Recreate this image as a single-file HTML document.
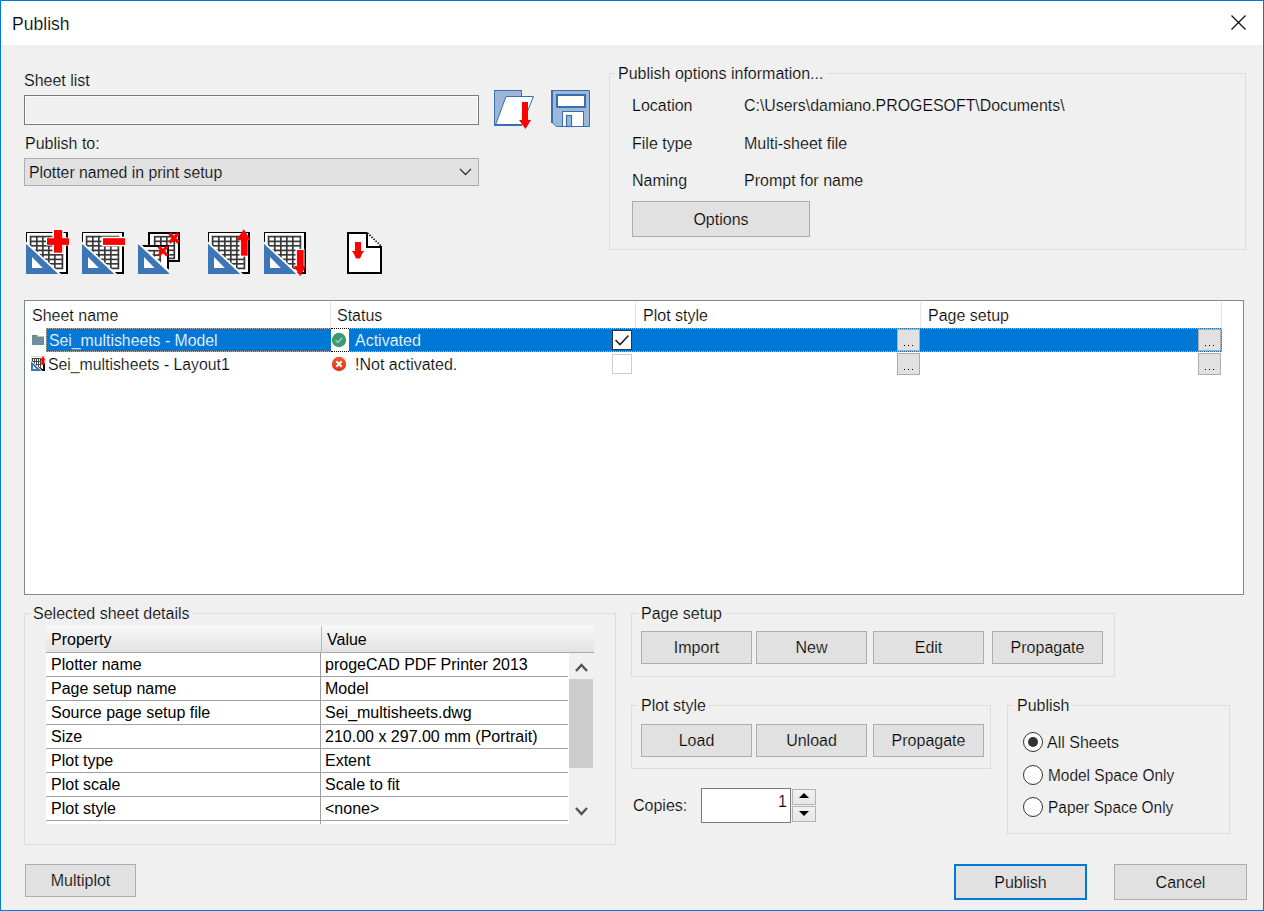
<!DOCTYPE html>
<html><head><meta charset="utf-8">
<style>
*{box-sizing:border-box;margin:0;padding:0}
html,body{width:1264px;height:911px;overflow:hidden;background:#f0f0f0}
body{position:relative;font-family:"Liberation Sans",sans-serif;font-size:16px;line-height:16px;color:#000}
.a{position:absolute}
.t{position:absolute;white-space:pre;font-size:16px;line-height:16px}
.win{position:absolute;left:0;top:0;width:1264px;height:911px;border:1px solid #0078d7;background:#f0f0f0}
.title{position:absolute;left:1px;top:1px;width:1262px;height:44px;background:#fff}
.grp{position:absolute;border:1px solid #dcdcdc}
.glab{position:absolute;background:#f0f0f0;padding:0 3px;white-space:pre;line-height:16px}
.btn{position:absolute;background:#e1e1e1;border:1px solid #adadad;text-align:center;white-space:pre}
.bt{position:absolute;left:0;right:0;line-height:16px;-webkit-text-stroke:0.2px #e1e1e1}
.t,.glab{-webkit-text-stroke:0.2px #f0f0f0}
.sw{-webkit-text-stroke:0.2px #fff}
.sb{-webkit-text-stroke:0.2px #0078d7}
.sg{-webkit-text-stroke:0.2px #e1e1e1}
.sn{-webkit-text-stroke:0}
</style></head><body>
<div class="win"></div>
<div class="title"></div>
<div class="t sw" style="left:12px;top:14px;font-size:19px;line-height:19px;transform:scaleX(0.925);transform-origin:0 0">Publish</div>
<!-- close X -->
<svg class="a" style="left:1230px;top:14px" width="17" height="17" viewBox="0 0 17 17"><path d="M1.5 1.5L15.5 15.5M15.5 1.5L1.5 15.5" stroke="#111" stroke-width="1.3" fill="none"/></svg>

<!-- Sheet list -->
<div class="t" style="left:24px;top:73px">Sheet list</div>
<div class="a" style="left:24px;top:95px;width:455px;height:30px;border:1px solid #7a7a7a;background:#f0f0f0;box-shadow:inset 0 0 0 1px #fbfbfb"></div>

<div class="t" style="left:25px;top:136px">Publish to:</div>
<div class="a" style="left:24px;top:158px;width:455px;height:28px;border:1px solid #adadad;background:#e1e1e1"></div>
<div class="t sg" style="left:29px;top:165px;font-size:15.8px">Plotter named in print setup</div>
<svg class="a" style="left:459px;top:168px" width="13" height="8" viewBox="0 0 13 8"><path d="M1 1L6.5 6.5L12 1" stroke="#333" stroke-width="1.3" fill="none"/></svg>

<!-- Publish options group -->
<div class="grp" style="left:609px;top:73px;width:637px;height:177px"></div>
<div class="glab" style="left:615px;top:66px">Publish options information...</div>
<div class="t" style="left:632px;top:98px">Location</div>
<div class="t" style="left:744px;top:98px;font-size:15.9px">C:\Users\damiano.PROGESOFT\Documents\</div>
<div class="t" style="left:632px;top:136px">File type</div>
<div class="t" style="left:744px;top:136px">Multi-sheet file</div>
<div class="t" style="left:632px;top:173px">Naming</div>
<div class="t" style="left:744px;top:173px">Prompt for name</div>
<div class="btn" style="left:632px;top:201px;width:178px;height:36px"><div class="bt" style="top:10px">Options</div></div>

<!-- ICONS -->
<svg class="a" style="left:22px;top:228px" width="52" height="52" viewBox="0 0 52 52"><g transform="translate(4,4)"><rect x="0" y="0" width="42" height="42" fill="#000"/><rect x="1" y="1" width="39" height="39" fill="#fff"/><g fill="#383838"><rect x="3.75" y="3.9" width="1.7" height="33.2"/><rect x="9.95" y="3.9" width="1.7" height="33.2"/><rect x="15.95" y="3.9" width="1.7" height="33.2"/><rect x="21.95" y="3.9" width="1.7" height="33.2"/><rect x="27.95" y="3.9" width="1.7" height="33.2"/><rect x="35.55" y="3.9" width="1.7" height="33.2"/><rect x="3.9" y="3.75" width="33.2" height="1.7"/><rect x="3.9" y="8.55" width="33.2" height="1.7"/><rect x="3.9" y="12.95" width="33.2" height="1.7"/><rect x="3.9" y="17.55" width="33.2" height="1.7"/><rect x="3.9" y="21.95" width="33.2" height="1.7"/><rect x="3.9" y="26.55" width="33.2" height="1.7"/><rect x="3.9" y="30.95" width="33.2" height="1.7"/><rect x="3.9" y="35.55" width="33.2" height="1.7"/></g><path d="M0 9.5 L35 42 L0 42 Z" fill="#fff"/><path d="M0 11.8 L32.3 42 L0 42 Z" fill="#3d76b6"/><path d="M6 25.1 L16.8 36 L6 36 Z" fill="#fff"/></g><g transform="translate(4,4)"><path d="M26.5 -3 h11 v8.5 h6 v8 h-6 v8.5 h-11 v-8.5 h-6.5 v-8 h6.5 z" fill="#fff"/><rect x="28" y="-2" width="8.2" height="22.7" fill="#f00"/><rect x="21" y="6.2" width="22" height="6.7" fill="#f00"/></g></svg>
<svg class="a" style="left:78px;top:228px" width="52" height="52" viewBox="0 0 52 52"><g transform="translate(4,4)"><rect x="0" y="0" width="42" height="42" fill="#000"/><rect x="1" y="1" width="39" height="39" fill="#fff"/><g fill="#383838"><rect x="3.75" y="3.9" width="1.7" height="33.2"/><rect x="9.95" y="3.9" width="1.7" height="33.2"/><rect x="15.95" y="3.9" width="1.7" height="33.2"/><rect x="21.95" y="3.9" width="1.7" height="33.2"/><rect x="27.95" y="3.9" width="1.7" height="33.2"/><rect x="35.55" y="3.9" width="1.7" height="33.2"/><rect x="3.9" y="3.75" width="33.2" height="1.7"/><rect x="3.9" y="8.55" width="33.2" height="1.7"/><rect x="3.9" y="12.95" width="33.2" height="1.7"/><rect x="3.9" y="17.55" width="33.2" height="1.7"/><rect x="3.9" y="21.95" width="33.2" height="1.7"/><rect x="3.9" y="26.55" width="33.2" height="1.7"/><rect x="3.9" y="30.95" width="33.2" height="1.7"/><rect x="3.9" y="35.55" width="33.2" height="1.7"/></g><path d="M0 9.5 L35 42 L0 42 Z" fill="#fff"/><path d="M0 11.8 L32.3 42 L0 42 Z" fill="#3d76b6"/><path d="M6 25.1 L16.8 36 L6 36 Z" fill="#fff"/></g><g transform="translate(4,4)"><rect x="19.5" y="4.7" width="23" height="9.7" fill="#fff"/><rect x="21" y="6.2" width="22" height="6.7" fill="#f00"/></g></svg>
<svg class="a" style="left:204px;top:228px" width="52" height="52" viewBox="0 0 52 52"><g transform="translate(4,4)"><rect x="0" y="0" width="42" height="42" fill="#000"/><rect x="1" y="1" width="39" height="39" fill="#fff"/><g fill="#383838"><rect x="3.75" y="3.9" width="1.7" height="33.2"/><rect x="9.95" y="3.9" width="1.7" height="33.2"/><rect x="15.95" y="3.9" width="1.7" height="33.2"/><rect x="21.95" y="3.9" width="1.7" height="33.2"/><rect x="27.95" y="3.9" width="1.7" height="33.2"/><rect x="35.55" y="3.9" width="1.7" height="33.2"/><rect x="3.9" y="3.75" width="33.2" height="1.7"/><rect x="3.9" y="8.55" width="33.2" height="1.7"/><rect x="3.9" y="12.95" width="33.2" height="1.7"/><rect x="3.9" y="17.55" width="33.2" height="1.7"/><rect x="3.9" y="21.95" width="33.2" height="1.7"/><rect x="3.9" y="26.55" width="33.2" height="1.7"/><rect x="3.9" y="30.95" width="33.2" height="1.7"/><rect x="3.9" y="35.55" width="33.2" height="1.7"/></g><path d="M0 9.5 L35 42 L0 42 Z" fill="#fff"/><path d="M0 11.8 L32.3 42 L0 42 Z" fill="#3d76b6"/><path d="M6 25.1 L16.8 36 L6 36 Z" fill="#fff"/></g><g transform="translate(4,4)"><path d="M31.5 8 H40 V24.5 H31.5 Z" fill="#fff"/><path d="M32.9 6 H39.7 V23.7 H32.9 Z" fill="#f00"/><path d="M28.3 8.3 L35.8 -2.8 L42.7 8.3 Z" fill="#f00"/></g></svg>
<svg class="a" style="left:260px;top:228px" width="52" height="52" viewBox="0 0 52 52"><g transform="translate(4,4)"><rect x="0" y="0" width="42" height="42" fill="#000"/><rect x="1" y="1" width="39" height="39" fill="#fff"/><g fill="#383838"><rect x="3.75" y="3.9" width="1.7" height="33.2"/><rect x="9.95" y="3.9" width="1.7" height="33.2"/><rect x="15.95" y="3.9" width="1.7" height="33.2"/><rect x="21.95" y="3.9" width="1.7" height="33.2"/><rect x="27.95" y="3.9" width="1.7" height="33.2"/><rect x="35.55" y="3.9" width="1.7" height="33.2"/><rect x="3.9" y="3.75" width="33.2" height="1.7"/><rect x="3.9" y="8.55" width="33.2" height="1.7"/><rect x="3.9" y="12.95" width="33.2" height="1.7"/><rect x="3.9" y="17.55" width="33.2" height="1.7"/><rect x="3.9" y="21.95" width="33.2" height="1.7"/><rect x="3.9" y="26.55" width="33.2" height="1.7"/><rect x="3.9" y="30.95" width="33.2" height="1.7"/><rect x="3.9" y="35.55" width="33.2" height="1.7"/></g><path d="M0 9.5 L35 42 L0 42 Z" fill="#fff"/><path d="M0 11.8 L32.3 42 L0 42 Z" fill="#3d76b6"/><path d="M6 25.1 L16.8 36 L6 36 Z" fill="#fff"/></g><g transform="translate(4,4)"><rect x="31.5" y="17" width="9" height="17" fill="#fff"/><path d="M32.9 18 H39.7 V35 H32.9 Z" fill="#f00"/><path d="M29.8 34 L42.1 34 L36.2 44.3 Z" fill="#f00"/></g></svg>
<svg class="a" style="left:134px;top:228px" width="52" height="52" viewBox="0 0 52 52"><g transform="translate(-134,-228)"><rect x="148" y="232" width="32" height="30" fill="#000"/><rect x="150" y="234" width="28" height="26" fill="#fff"/><g fill="#383838"><rect x="153.85" y="236" width="1.7" height="23"/><rect x="159.95" y="236" width="1.7" height="23"/><rect x="165.95" y="236" width="1.7" height="23"/><rect x="173.45" y="236" width="1.7" height="23"/><rect x="154" y="235.85" width="21" height="1.7"/><rect x="154" y="240.45" width="21" height="1.7"/><rect x="154" y="244.95" width="21" height="1.7"/><rect x="154" y="249.45" width="21" height="1.7"/><rect x="154" y="253.95" width="21" height="1.7"/><rect x="154" y="257.55" width="21" height="1.7"/></g><rect x="142" y="245" width="27" height="29" fill="#000"/><rect x="143" y="247" width="24" height="27" fill="#fff"/><g fill="#383838"><rect x="147.35" y="250" width="1.7" height="16"/><rect x="153.35" y="250" width="1.7" height="16"/><rect x="159.35" y="250" width="1.7" height="16"/><rect x="147.5" y="249.85" width="13.5" height="1.7"/><rect x="147.5" y="254.35" width="13.5" height="1.7"/><rect x="147.5" y="258.85" width="13.5" height="1.7"/><rect x="147.5" y="263.35" width="13.5" height="1.7"/></g><path d="M138 241.5 L173.5 274 L138 274 Z" fill="#fff"/><path d="M138 244 L170 274 L138 274 Z" fill="#3d76b6"/><path d="M144 257 L154.5 268 L144 268 Z" fill="#fff"/><rect x="169" y="262" width="11" height="12" fill="#f0f0f0"/><path d="M169.5 233.5 L178.5 242.5 M178.5 233.5 L169.5 242.5" stroke="#f00" stroke-width="3.2"/><path d="M158.7 246.5 L167.3 255.5 M167.3 246.5 L158.7 255.5" stroke="#f00" stroke-width="3.2"/></g></svg>
<svg class="a" style="left:344px;top:228px" width="42" height="50" viewBox="344 228 42 50"><path d="M348 233 H367.5 L381 246 V273 H348 Z" fill="#fff"/><path d="M367.5 233 H348 V273 H381 V246" fill="none" stroke="#000" stroke-width="2"/><path d="M367.5 233 L381 246" fill="none" stroke="#000" stroke-width="1.6" stroke-dasharray="1.4 1.4"/><path d="M367 233 V247 H381" fill="none" stroke="#000" stroke-width="2"/><rect x="355" y="242" width="6" height="10" fill="#f00"/><path d="M352 251 H364 L362 254 L360 258.5 H356 L354 254 Z" fill="#f00"/></svg>
<svg class="a" style="left:490px;top:86px" width="50" height="46" viewBox="490 86 50 46"><rect x="494.5" y="90.5" width="27" height="35" fill="#9ab7d8" stroke="#3a6eb0" stroke-width="1"/><path d="M506 96.5 H533.5 L522 125 H495.5 Z" fill="#fff" stroke="#3a6eb0" stroke-width="1"/><rect x="494" y="124" width="28" height="2" fill="#3a6eb0"/><rect x="522" y="102" width="6" height="19" fill="#f00"/><path d="M519 120 H531 L525.5 129 Z" fill="#f00"/></svg>
<svg class="a" style="left:546px;top:86px" width="50" height="46" viewBox="546 86 50 46"><path d="M551.5 90.5 H589.5 V126.5 H556.5 L551.5 122 Z" fill="#9bb8d8" stroke="#3a6eb0" stroke-width="1"/><rect x="551" y="90" width="2" height="33" fill="#3a6eb0"/><rect x="557" y="95" width="28" height="12" fill="#fff" stroke="#3a6eb0" stroke-width="2"/><rect x="562.5" y="111.5" width="21" height="15" fill="#fff" stroke="#3a6eb0" stroke-width="1"/><rect x="566.5" y="115.5" width="5" height="11" fill="#9bb8d8" stroke="#3a6eb0" stroke-width="1.2"/></svg>
<!-- /ICONS -->
<!-- MAIN -->
<div class="a" style="left:24px;top:300px;width:1220px;height:295px;border:1px solid #828790;background:#fff"></div>
<div class="a" style="left:330px;top:302px;width:1px;height:26px;background:#e5e5e5"></div>
<div class="a" style="left:635px;top:302px;width:1px;height:26px;background:#e5e5e5"></div>
<div class="a" style="left:920px;top:302px;width:1px;height:26px;background:#e5e5e5"></div>
<div class="a" style="left:1221px;top:302px;width:1px;height:26px;background:#e5e5e5"></div>
<div class="t sw" style="left:32px;top:308px">Sheet name</div>
<div class="t sw" style="left:337px;top:308px">Status</div>
<div class="t sw" style="left:643px;top:308px">Plot style</div>
<div class="t sw" style="left:928px;top:308px">Page setup</div>
<div class="a" style="left:46px;top:328px;width:285px;height:24px;background:#0078d7;border-top:1px dotted #f7a35c;border-bottom:1px dotted #f7a35c;border-left:1px dotted #f7a35c"></div>
<div class="a" style="left:331px;top:328px;width:18px;height:24px;background:#fff;border-top:1px dotted #000;border-bottom:1px dotted #000"></div>
<div class="a" style="left:349px;top:328px;width:873px;height:24px;background:#0078d7;border-top:1px dotted #f7a35c;border-bottom:1px dotted #f7a35c;border-right:1px dotted #f7a35c"></div>
<svg class="a" style="left:32px;top:334px" width="13" height="12" viewBox="0 0 13 12"><path d="M0 2 H5 L6 1 H0 Z" fill="#6d8a70"/><rect x="0" y="1" width="5" height="2" fill="#6d8a70"/><rect x="0" y="2.5" width="12" height="8.5" fill="#6f8ea0"/><rect x="0" y="3" width="12" height="1" fill="#708a78"/></svg>
<div class="t sb" style="left:49px;top:333px;color:#fff;font-size:15.8px">Sei_multisheets - Model</div>
<svg class="a" style="left:331px;top:332px" width="16" height="16" viewBox="0 0 16 16"><circle cx="8" cy="8" r="7.2" fill="#3f9a6b"/><path d="M4.6 8.2 L7 10.4 L11.2 5.8" stroke="#9cc3ea" stroke-width="1.5" fill="none"/></svg>
<div class="t sb" style="left:355px;top:333px;color:#fff">Activated</div>
<div class="a" style="left:612px;top:330px;width:20px;height:20px;background:#fff;border:1.5px solid #333"></div>
<svg class="a" style="left:612px;top:330px" width="20" height="20" viewBox="0 0 20 20"><path d="M3.5 10 L8 14.5 L16.5 5.5" stroke="#222" stroke-width="1.6" fill="none"/></svg>
<div class="btn" style="left:897px;top:329px;width:23px;height:22px"></div><div class="a" style="left:904px;top:345px;width:1px;height:1px;background:#000"></div><div class="a" style="left:908px;top:345px;width:1px;height:1px;background:#000"></div><div class="a" style="left:912px;top:345px;width:1px;height:1px;background:#000"></div>
<div class="btn" style="left:1198px;top:329px;width:23px;height:22px"></div><div class="a" style="left:1205px;top:345px;width:1px;height:1px;background:#000"></div><div class="a" style="left:1209px;top:345px;width:1px;height:1px;background:#000"></div><div class="a" style="left:1213px;top:345px;width:1px;height:1px;background:#000"></div>
<svg class="a" style="left:30px;top:355px" width="16" height="17" viewBox="30 355 16 17" shape-rendering="crispEdges"><rect x="31" y="356" width="14" height="15" fill="#fff"/><rect x="31" y="356" width="14" height="1" fill="#dcdcdc"/><rect x="31" y="356" width="1" height="6" fill="#dcdcdc"/><rect x="32" y="358" width="9" height="10" fill="#444"/><g fill="#fff"><rect x="33" y="359" width="1" height="2"/><rect x="33" y="362" width="1" height="2"/><rect x="33" y="365" width="1" height="2"/><rect x="35" y="359" width="1" height="2"/><rect x="35" y="362" width="1" height="2"/><rect x="35" y="365" width="1" height="2"/><rect x="37" y="359" width="1" height="2"/><rect x="37" y="362" width="1" height="2"/><rect x="37" y="365" width="1" height="2"/><rect x="39" y="359" width="1" height="2"/><rect x="39" y="362" width="1" height="2"/><rect x="39" y="365" width="1" height="2"/></g><rect x="38" y="368" width="4" height="1" fill="#444"/><rect x="43" y="363" width="2" height="8" fill="#000"/><rect x="40" y="369" width="5" height="2" fill="#000"/></svg><svg class="a" style="left:30px;top:355px" width="16" height="17" viewBox="30 355 16 17"><path d="M31 360.3 L42.5 371 L31 371 Z" fill="#fff"/><path d="M31 361.3 L41.6 371 L31 371 Z" fill="#3d76b6"/><path d="M33 365.4 L36.5 369 L33 369 Z" fill="#fff"/><rect x="41.3" y="359" width="3.2" height="6" fill="#f00"/><path d="M40.3 360 L42.9 356 L45.3 360 Z" fill="#f00"/></svg>
<div class="t sw" style="left:48px;top:357px;font-size:15.8px">Sei_multisheets - Layout1</div>
<svg class="a" style="left:331px;top:356px" width="16" height="16" viewBox="0 0 16 16"><defs><linearGradient id="rg" x1="0" y1="0" x2="0" y2="1"><stop offset="0" stop-color="#f05a24"/><stop offset="1" stop-color="#d8361a"/></linearGradient></defs><circle cx="8" cy="8" r="7.2" fill="url(#rg)"/><path d="M5.3 5.3 L10.7 10.7 M10.7 5.3 L5.3 10.7" stroke="#fff" stroke-width="2" fill="none"/></svg>
<div class="t sw" style="left:355px;top:357px">!Not activated.</div>
<div class="a" style="left:612px;top:354px;width:20px;height:20px;background:#fff;border:1px solid #cccccc"></div>
<div class="btn" style="left:897px;top:353px;width:23px;height:22px"></div><div class="a" style="left:904px;top:369px;width:1px;height:1px;background:#000"></div><div class="a" style="left:908px;top:369px;width:1px;height:1px;background:#000"></div><div class="a" style="left:912px;top:369px;width:1px;height:1px;background:#000"></div>
<div class="btn" style="left:1198px;top:353px;width:23px;height:22px"></div><div class="a" style="left:1205px;top:369px;width:1px;height:1px;background:#000"></div><div class="a" style="left:1209px;top:369px;width:1px;height:1px;background:#000"></div><div class="a" style="left:1213px;top:369px;width:1px;height:1px;background:#000"></div>
<div class="grp" style="left:24px;top:613px;width:592px;height:232px"></div>
<div class="glab" style="left:30px;top:606px">Selected sheet details</div>
<div class="a" style="left:46px;top:625px;width:548px;height:28px;background:linear-gradient(#f8f8f8,#e3e3e3);border-bottom:1px solid #a9a9a9"></div>
<div class="a" style="left:321px;top:626px;width:1px;height:26px;background:#b8b8b8"></div>
<div class="t sn" style="left:51px;top:632px">Property</div>
<div class="t sn" style="left:327px;top:632px">Value</div>
<div class="a" style="left:46px;top:653px;width:523px;height:171px;background:#fff"></div>
<div class="a" style="left:320px;top:653px;width:1px;height:171px;background:#a0a0a0"></div>
<div class="a" style="left:46px;top:676px;width:522px;height:1px;background:#a0a0a0"></div>
<div class="t sn" style="left:51px;top:657px">Plotter name</div>
<div class="t sn" style="left:325px;top:657px">progeCAD PDF Printer 2013</div>
<div class="a" style="left:46px;top:700px;width:522px;height:1px;background:#a0a0a0"></div>
<div class="t sn" style="left:51px;top:681px">Page setup name</div>
<div class="t sn" style="left:325px;top:681px">Model</div>
<div class="a" style="left:46px;top:724px;width:522px;height:1px;background:#a0a0a0"></div>
<div class="t sn" style="left:51px;top:705px">Source page setup file</div>
<div class="t sn" style="left:325px;top:705px">Sei_multisheets.dwg</div>
<div class="a" style="left:46px;top:748px;width:522px;height:1px;background:#a0a0a0"></div>
<div class="t sn" style="left:51px;top:729px">Size</div>
<div class="t sn" style="left:325px;top:729px">210.00 x 297.00 mm (Portrait)</div>
<div class="a" style="left:46px;top:772px;width:522px;height:1px;background:#a0a0a0"></div>
<div class="t sn" style="left:51px;top:753px">Plot type</div>
<div class="t sn" style="left:325px;top:753px">Extent</div>
<div class="a" style="left:46px;top:796px;width:522px;height:1px;background:#a0a0a0"></div>
<div class="t sn" style="left:51px;top:777px">Plot scale</div>
<div class="t sn" style="left:325px;top:777px">Scale to fit</div>
<div class="a" style="left:46px;top:820px;width:522px;height:1px;background:#a0a0a0"></div>
<div class="t sn" style="left:51px;top:801px">Plot style</div>
<div class="t sn" style="left:325px;top:801px">&lt;none&gt;</div>
<div class="a" style="left:569px;top:679px;width:24px;height:89px;background:#cdcdcd"></div>
<svg class="a" style="left:575px;top:662px" width="13" height="11" viewBox="0 0 13 11"><path d="M1 9 L6.5 3 L12 9" stroke="#555" stroke-width="2.4" fill="none"/></svg>
<svg class="a" style="left:575px;top:806px" width="13" height="11" viewBox="0 0 13 11"><path d="M1 2 L6.5 8 L12 2" stroke="#555" stroke-width="2.4" fill="none"/></svg>
<div class="grp" style="left:631px;top:613px;width:484px;height:64px"></div>
<div class="glab" style="left:638px;top:606px">Page setup</div>
<div class="btn" style="left:641px;top:631px;width:111px;height:33px"><div class="bt" style="top:8px">Import</div></div>
<div class="btn" style="left:756px;top:631px;width:111px;height:33px"><div class="bt" style="top:8px">New</div></div>
<div class="btn" style="left:873px;top:631px;width:111px;height:33px"><div class="bt" style="top:8px">Edit</div></div>
<div class="btn" style="left:992px;top:631px;width:111px;height:33px"><div class="bt" style="top:8px">Propagate</div></div>
<div class="grp" style="left:631px;top:705px;width:360px;height:64px"></div>
<div class="glab" style="left:638px;top:698px">Plot style</div>
<div class="btn" style="left:641px;top:724px;width:111px;height:33px"><div class="bt" style="top:8px">Load</div></div>
<div class="btn" style="left:756px;top:724px;width:111px;height:33px"><div class="bt" style="top:8px">Unload</div></div>
<div class="btn" style="left:873px;top:724px;width:111px;height:33px"><div class="bt" style="top:8px">Propagate</div></div>
<div class="t" style="left:633px;top:798px">Copies:</div>
<div class="a" style="left:701px;top:788px;width:90px;height:35px;background:#fff;border:1px solid #7a7a7a"></div>
<div class="t sw" style="left:700px;width:87px;text-align:right;top:794px">1</div>
<div class="a" style="left:792px;top:789px;width:24px;height:16px;background:linear-gradient(#f2f2f2,#e6e6e6);border:1px solid #b3b3b3"></div>
<div class="a" style="left:792px;top:806px;width:24px;height:16px;background:linear-gradient(#f2f2f2,#e6e6e6);border:1px solid #b3b3b3"></div>
<svg class="a" style="left:798px;top:792px" width="12" height="7" viewBox="0 0 12 7"><path d="M1 6 L6 1 L11 6 Z" fill="#000"/></svg>
<svg class="a" style="left:798px;top:810px" width="12" height="7" viewBox="0 0 12 7"><path d="M1 1 L6 6 L11 1 Z" fill="#000"/></svg>
<div class="grp" style="left:1007px;top:705px;width:223px;height:129px"></div>
<div class="glab" style="left:1014px;top:698px">Publish</div>
<div class="a" style="left:1023px;top:732px;width:20px;height:20px;border-radius:50%;background:#fff;border:1.5px solid #333"></div>
<div class="a" style="left:1028px;top:737px;width:10px;height:10px;border-radius:50%;background:#333"></div>
<div class="t" style="left:1047px;top:735px">All Sheets</div>
<div class="a" style="left:1023px;top:765px;width:20px;height:20px;border-radius:50%;background:#fff;border:1.5px solid #333"></div>
<div class="t" style="left:1048px;top:768px;transform:scaleX(0.965);transform-origin:0 0">Model Space Only</div>
<div class="a" style="left:1023px;top:797px;width:20px;height:20px;border-radius:50%;background:#fff;border:1.5px solid #333"></div>
<div class="t" style="left:1048px;top:800px;transform:scaleX(0.965);transform-origin:0 0">Paper Space Only</div>
<div class="btn" style="left:25px;top:864px;width:111px;height:33px"><div class="bt" style="top:8px">Multiplot</div></div>
<div class="btn" style="left:954px;top:864px;width:133px;height:36px;border:2px solid #0078d7"><div class="bt" style="top:9px">Publish</div></div>
<div class="btn" style="left:1114px;top:864px;width:133px;height:36px"><div class="bt" style="top:10px">Cancel</div></div>
<!-- /MAIN -->
</body></html>
